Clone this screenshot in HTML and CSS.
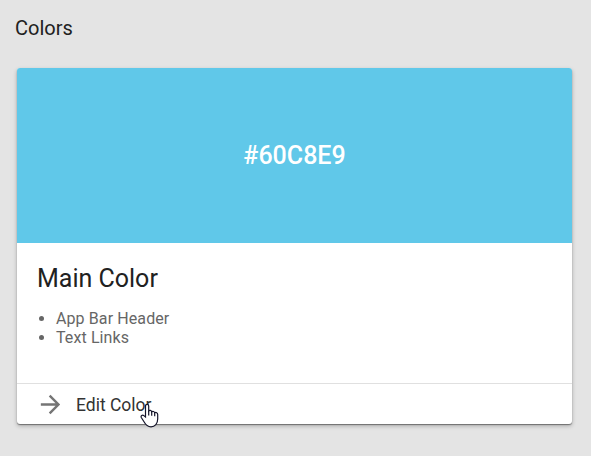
FILE: index.html
```html
<!DOCTYPE html>
<html lang="en">
<head>
    <meta charset="UTF-8">
    <meta name="viewport" content="width=device-width, initial-scale=1.0">
    <title>Colors</title>
    <link rel="stylesheet" href="styles.css">
</head>
<body>
    <h1 class="page-title">Colors</h1>
    <div class="card">
        <div class="swatch">#60C8E9</div>
        <div class="card-body">
            <h2>Main Color</h2>
            <ul>
                <li>App Bar Header</li>
                <li>Text Links</li>
            </ul>
        </div>
        <a class="card-action">
            <svg class="arrow" viewBox="0 0 24 24"><path d="M12 4l-1.41 1.41L16.17 11H4v2h12.17l-5.58 5.59L12 20l8-8z"/></svg>
            <span>Edit Color</span>
        </a>
    </div>
    <svg class="pointer" viewBox="0 0 19 25"><path d="M5.500 14V3C5.500 .7 8.700 .7 8.700 3V8C9.500 6.900 11.500 7.300 11.700 8.800C12.700 8 14.500 8.400 14.700 9.800C16 9 17.700 9.800 17.700 11.500V16C17.700 20.500 15 23.800 11 23.800C7.500 23.800 5.500 21.500 4 18.800L1.300 14.500C.5 13 2.400 11.500 3.800 12.600Z"/><path d="M8.700 8v4.500M11.700 8.800v4M14.700 9.800v3.500"/></svg>
</body>
</html>
```

FILE: styles.css
```css
body {
    box-sizing: border-box;
    min-height: 100vh;
    margin: 0;
    padding: 16px 19px 0 17px;
    background-color: #e4e4e4;
    font-family: Roboto, sans-serif;
    color: #212121;
}
.page-title {
    margin: 0 0 28px -2px;
    font-size: 20px;
    line-height: 24px;
    font-weight: 400;
}
.card {
    background-color: white;
    border-radius: 3px;
    overflow: hidden;
    box-shadow: 0 1px 1px rgba(0, 0, 0, 0.4), 0 2px 4px rgba(0, 0, 0, 0.25);
}
.swatch {
    display: flex;
    align-items: center;
    justify-content: center;
    height: 175px;
    background-color: #60c8e9;
    color: white;
    font-size: 25px;
    font-weight: 500;
}
.card-body {
    height: 140px;
    padding: 0 20px;
    overflow: hidden;
}
h2 {
    margin: 21px 0 15px;
    font-size: 25px;
    line-height: 30px;
    font-weight: 400;
}
ul {
    margin: 0;
    padding-left: 19px;
    color: #666;
    font-size: 16px;
    line-height: 19px;
    letter-spacing: 0.1px;
}
.card-action {
    display: flex;
    align-items: center;
    height: 40px;
    padding-left: 19px;
    border-top: 1px solid #e0e0e0;
    color: #333;
    font-size: 17.5px;
    cursor: pointer;
}
.card-action span {
    padding-top: 2px;
}
.arrow {
    width: 29px;
    height: 29px;
    margin-right: 11px;
    fill: #757575;
}
.pointer {
    position: absolute;
    left: 140px;
    top: 403px;
    width: 19px;
    height: 25px;
    fill: white;
    stroke: #15152a;
    stroke-width: 1.2;
}
```
